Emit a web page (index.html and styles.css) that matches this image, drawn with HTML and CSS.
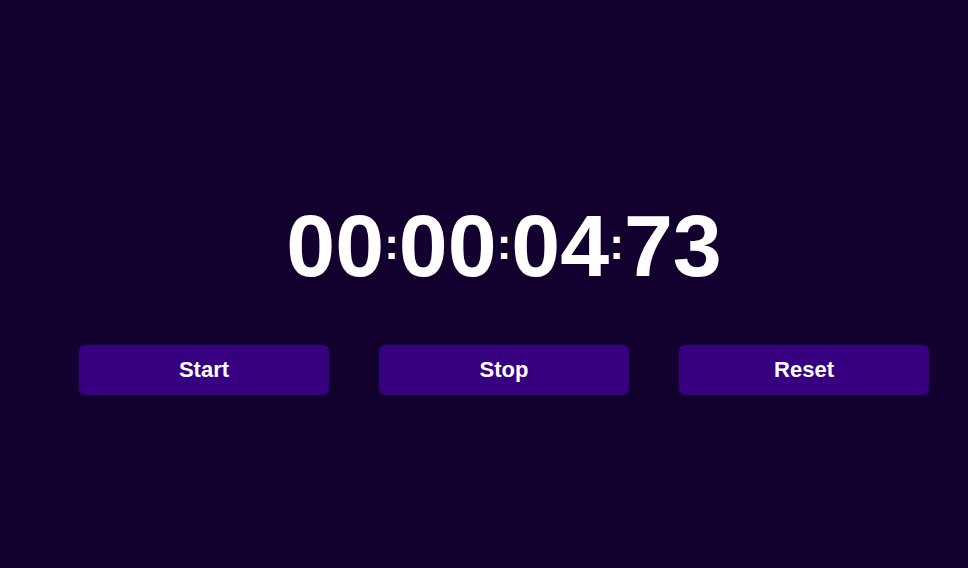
FILE: index.html
```html
<!DOCTYPE html>
<html lang="en">
<head>
<meta charset="utf-8">
<title>Stopwatch</title>
<link rel="stylesheet" href="styles.css">
</head>
<body>
<main class="app">
  <div class="timer">
    <span class="digits">00</span><span class="colon">:</span><span class="digits">00</span><span class="colon">:</span><span class="digits">04</span><span class="colon">:</span><span class="digits">73</span>
  </div>
  <div class="controls">
    <button class="btn">Start</button>
    <button class="btn">Stop</button>
    <button class="btn">Reset</button>
  </div>
</main>
</body>
</html>
```
FILE: styles.css
```css
html, body {
  margin: 0;
  padding: 0;
  background: #12002e;
  height: 100%;
}
body {
  font-family: "Liberation Sans", Arial, sans-serif;
  color: #ffffff;
}
.app {
  box-sizing: border-box;
  height: 568px;
  padding: 202px 0 0 40px;
  display: flex;
  flex-direction: column;
  align-items: center;
}
.timer {
  display: flex;
  align-items: center;
  justify-content: center;
  height: 88px;
}
.digits {
  font-size: 88px;
  font-weight: 700;
  line-height: 1;
}
.colon {
  font-size: 44px;
  font-weight: 700;
  line-height: 1;
  margin-bottom: 5px;
}
.controls {
  margin-top: 55px;
  display: flex;
  gap: 50px;
}
.btn {
  width: 250px;
  height: 50px;
  border: none;
  border-radius: 6px;
  background: #360080;
  color: #ffffff;
  font-family: "Liberation Sans", Arial, sans-serif;
  font-size: 22px;
  font-weight: 700;
  padding: 0;
  cursor: pointer;
}
```
